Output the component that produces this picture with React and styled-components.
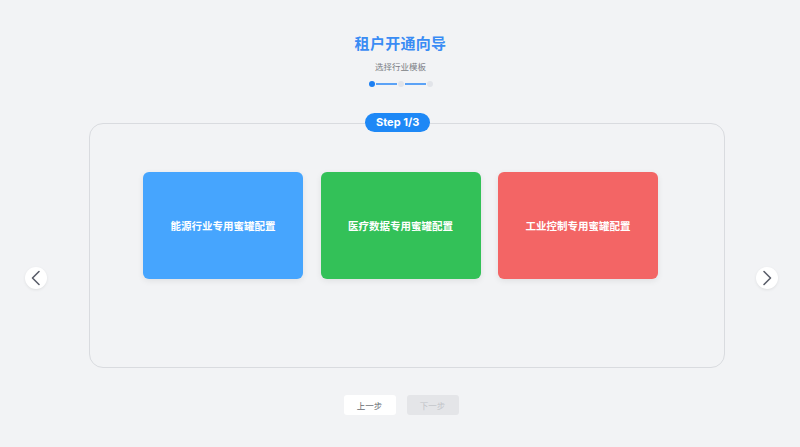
import React from "react";
import styled, { createGlobalStyle } from "styled-components";

const GlobalStyle = createGlobalStyle`
  html, body {
    margin: 0;
    padding: 0;
    background: #f2f3f5;
    font-family: Inter, "Noto Sans", "Noto Sans CJK SC", sans-serif;
  }
`;

const templates = [
  { id: "energy", label: "能源行业专用蜜罐配置", color: "#46a5fe" },
  { id: "medical", label: "医疗数据专用蜜罐配置", color: "#33c158" },
  { id: "industry", label: "工业控制专用蜜罐配置", color: "#f36565" },
];

const App = () => {
  const step = 1;
  const total = 3;

  return (
    <Page>
      <GlobalStyle />
      <Header>
        <Title>租户开通向导</Title>
        <Subtitle>选择行业模板</Subtitle>
        <Progress>
          {Array.from({ length: total }).map((_, i) => (
            <React.Fragment key={i}>
              {i > 0 && <Line />}
              <Dot active={i < step} />
            </React.Fragment>
          ))}
        </Progress>
      </Header>

      <Stage>
        <NavButton aria-label="上一个">
          <svg width="16" height="16" viewBox="0 0 16 16" fill="none">
            <path d="M11 1.5 L4.5 8 L11 14.5" stroke="#5a5e6a" strokeWidth="1.6" strokeLinecap="round" strokeLinejoin="round" />
          </svg>
        </NavButton>

        <Panel>
          <StepBadge>
            Step {step}/{total}
          </StepBadge>
          <CardRow>
            {templates.map((t) => (
              <TemplateCard key={t.id} color={t.color}>
                {t.label}
              </TemplateCard>
            ))}
          </CardRow>
        </Panel>

        <NavButton aria-label="下一个" right>
          <svg width="16" height="16" viewBox="0 0 16 16" fill="none">
            <path d="M5 1.5 L11.5 8 L5 14.5" stroke="#5a5e6a" strokeWidth="1.6" strokeLinecap="round" strokeLinejoin="round" />
          </svg>
        </NavButton>
      </Stage>

      <Actions>
        <ActionButton>上一步</ActionButton>
        <ActionButton disabled>下一步</ActionButton>
      </Actions>
    </Page>
  );
};

const Page = styled.div`
  width: 800px;
  height: 447px;
  overflow: hidden;
  background: #f2f3f5;
`;

const Header = styled.div`
  display: flex;
  flex-direction: column;
  align-items: center;
  padding-top: 34px;
  padding-left: 1px;
`;

const Title = styled.h1`
  margin: 0;
  font-size: 15px;
  line-height: 20px;
  font-weight: 700;
  color: #3a8cf4;
  letter-spacing: 0.3px;
`;

const Subtitle = styled.div`
  margin-top: 7px;
  font-size: 8.5px;
  line-height: 12px;
  color: #7a7d84;
`;

const Progress = styled.div`
  margin-top: 8px;
  display: flex;
  align-items: center;
  gap: 1px;
`;

const Dot = styled.span`
  width: 6px;
  height: 6px;
  border-radius: 50%;
  background: ${(p) => (p.active ? "#1c7ff2" : "#e2e4e9")};
`;

const Line = styled.span`
  width: 21px;
  height: 2px;
  background: #5ba2f6;
`;

const Stage = styled.div`
  margin-top: 36px;
  display: flex;
  align-items: flex-start;
  padding-left: 25px;
`;

const NavButton = styled.button`
  margin-top: 144px;
  margin-left: ${(p) => (p.right ? "31px" : "0")};
  margin-right: ${(p) => (p.right ? "0" : "42px")};
  width: 22px;
  height: 22px;
  border: none;
  border-radius: 50%;
  background: #ffffff;
  box-shadow: 0 1px 3px rgba(0, 0, 0, 0.08);
  display: flex;
  align-items: center;
  justify-content: center;
  padding: 0;
  cursor: pointer;
`;

const Panel = styled.div`
  position: relative;
  box-sizing: border-box;
  width: 636px;
  height: 245px;
  border: 1px solid #d9dbdf;
  border-radius: 14px;
  padding: 48px 0 0 53px;
`;

const StepBadge = styled.div`
  position: absolute;
  top: -11px;
  left: 275px;
  height: 19px;
  padding: 0 11px;
  border-radius: 10px;
  background: #1e88f6;
  color: #ffffff;
  font-size: 11px;
  font-weight: 700;
  line-height: 19px;
  white-space: nowrap;
`;

const CardRow = styled.div`
  display: flex;
  gap: 17.5px;
`;

const TemplateCard = styled.div`
  width: 160px;
  height: 107px;
  border-radius: 6px;
  background: ${(p) => p.color};
  box-shadow: 0 2px 6px rgba(0, 0, 0, 0.08);
  display: flex;
  align-items: center;
  justify-content: center;
  color: #ffffff;
  font-size: 10.5px;
  font-weight: 700;
  cursor: pointer;
`;

const Actions = styled.div`
  margin-top: 27px;
  display: flex;
  justify-content: center;
  gap: 11px;
  padding-left: 2px;
`;

const ActionButton = styled.button`
  width: 52px;
  height: 20px;
  border: none;
  border-radius: 3px;
  padding: 0;
  font-family: inherit;
  font-size: 8.5px;
  background: ${(p) => (p.disabled ? "#e4e5e8" : "#ffffff")};
  color: ${(p) => (p.disabled ? "#c2c4c8" : "#666a70")};
  cursor: ${(p) => (p.disabled ? "not-allowed" : "pointer")};
`;

export default App;
